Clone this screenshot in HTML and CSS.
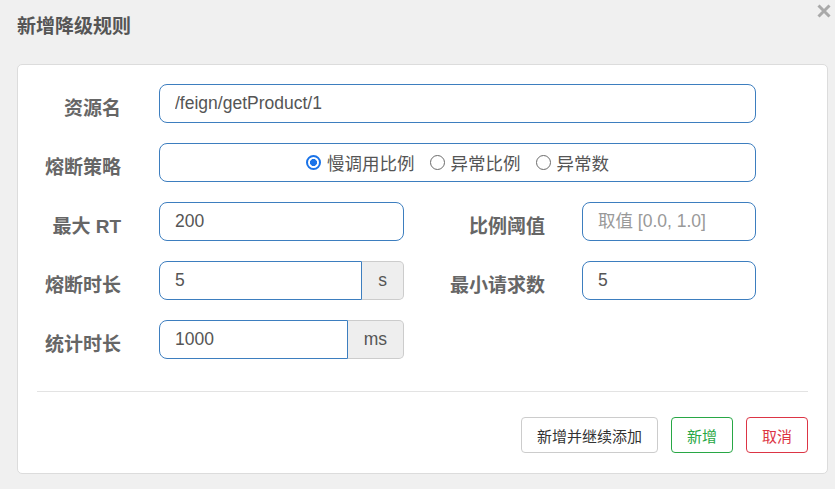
FILE: index.html
```html
<!DOCTYPE html>
<html lang="zh-CN">
<head>
<meta charset="utf-8">
<title>新增降级规则</title>
<link rel="stylesheet" href="styles.css">
</head>
<body>
<div class="dialog">
  <div class="dialog-header">
    <h1 class="dialog-title">新增降级规则</h1>
    <button class="close" aria-label="关闭">
      <svg width="14" height="14" viewBox="0 0 14 14"><path d="M1.5 1.5 L12.5 12.5 M12.5 1.5 L1.5 12.5" stroke="#a9a9a9" stroke-width="3" stroke-linecap="butt"/></svg>
    </button>
  </div>
  <div class="card">
    <div class="form">
      <div class="row">
        <label class="label">资源名</label>
        <input class="field field-full" type="text" value="/feign/getProduct/1">
      </div>
      <div class="row">
        <label class="label">熔断策略</label>
        <div class="field field-full radio-box">
          <label class="radio-item"><input class="radio" type="radio" name="grade" checked><span>慢调用比例</span></label>
          <label class="radio-item"><input class="radio" type="radio" name="grade"><span>异常比例</span></label>
          <label class="radio-item"><input class="radio" type="radio" name="grade"><span>异常数</span></label>
        </div>
      </div>
      <div class="row">
        <label class="label">最大 RT</label>
        <input class="field field-half" type="text" value="200">
        <label class="label label-right">比例阈值</label>
        <input class="field field-small" type="text" placeholder="取值 [0.0, 1.0]">
      </div>
      <div class="row">
        <label class="label">熔断时长</label>
        <div class="group">
          <input class="field group-input" type="text" value="5">
          <span class="addon">s</span>
        </div>
        <label class="label label-right">最小请求数</label>
        <input class="field field-small" type="text" value="5">
      </div>
      <div class="row">
        <label class="label">统计时长</label>
        <div class="group">
          <input class="field group-input" type="text" value="1000">
          <span class="addon">ms</span>
        </div>
      </div>
    </div>
    <hr class="divider">
    <div class="actions">
      <button class="btn btn-default">新增并继续添加</button>
      <button class="btn btn-success">新增</button>
      <button class="btn btn-danger">取消</button>
    </div>
  </div>
</div>
</body>
</html>
```
FILE: styles.css
```css
* { box-sizing: border-box; }
html, body {
  margin: 0;
  padding: 0;
  background: #f0f0f0;
  font-family: "Liberation Sans", "Noto Sans CJK SC", sans-serif;
}
.dialog {
  width: 835px;
  height: 489px;
  position: relative;
}
.dialog-header {
  height: 48px;
  display: flex;
  align-items: center;
  padding: 0 17px;
}
.dialog-title {
  margin: 0;
  font-size: 19px;
  font-weight: bold;
  color: #555;
}
.close {
  position: absolute;
  top: 4px;
  right: 4px;
  border: 0;
  background: none;
  padding: 0;
  width: 14px;
  height: 14px;
  cursor: pointer;
}
.close svg { display: block; }
.card {
  margin: 16px 7px 0 17px;
  background: #fff;
  border: 1px solid #dcdcdc;
  border-radius: 5px;
  padding: 19px 0 20px;
}
.form {
  display: flex;
  flex-direction: column;
  gap: 20px;
}
.row {
  display: flex;
  align-items: center;
  height: 39px;
}
.label {
  width: 103px;
  margin-right: 38px;
  padding-top: 6px;
  text-align: right;
  font-size: 19px;
  font-weight: bold;
  color: #666;
}
.label-right {
  width: 141px;
  margin-right: 37px;
}
.field {
  height: 39px;
  border: 1px solid #3d7ebf;
  border-radius: 8px;
  padding: 0 15px;
  font-family: inherit;
  font-size: 17.5px;
  color: #555;
  background: #fff;
  outline: none;
}
.field::placeholder { color: #999; }
.field-full { width: 597px; }
.field-half { width: 245px; }
.field-small { width: 174px; }
.group {
  display: flex;
  width: 245px;
  height: 39px;
}
.group-input {
  flex: 1;
  min-width: 0;
  border-radius: 8px 0 0 8px;
}
.addon {
  display: flex;
  align-items: center;
  padding: 0 16px;
  background: #eee;
  border: 1px solid #ccc;
  border-left: 0;
  border-radius: 0 5px 5px 0;
  font-size: 17.5px;
  color: #555;
}
.radio-box {
  display: flex;
  align-items: center;
  justify-content: center;
  gap: 15px;
}
.radio-item {
  display: flex;
  align-items: center;
  gap: 6px;
  color: #555;
  font-size: 17.5px;
}
.radio {
  appearance: none;
  -webkit-appearance: none;
  width: 15px;
  height: 15px;
  margin: 0;
  border: 1px solid #6b6b6b;
  border-radius: 50%;
  background: #fff;
}
.radio:checked {
  border: 2px solid #1a73e8;
  background: radial-gradient(circle, #1a73e8 0 3.2px, #fff 3.8px);
}
.divider {
  margin: 32px 19px 0;
  border: 0;
  border-top: 1px solid #e3e3e3;
}
.actions {
  display: flex;
  justify-content: flex-end;
  gap: 13px;
  margin-top: 25px;
  padding-right: 19px;
}
.btn {
  height: 36px;
  padding: 0 15px;
  border: 1px solid #ccc;
  border-radius: 4px;
  background: #fff;
  font-family: inherit;
  font-size: 15px;
  color: #333;
}
.btn-success { border-color: #28a745; color: #28a745; }
.btn-danger { border-color: #dc3545; color: #dc3545; }
```
